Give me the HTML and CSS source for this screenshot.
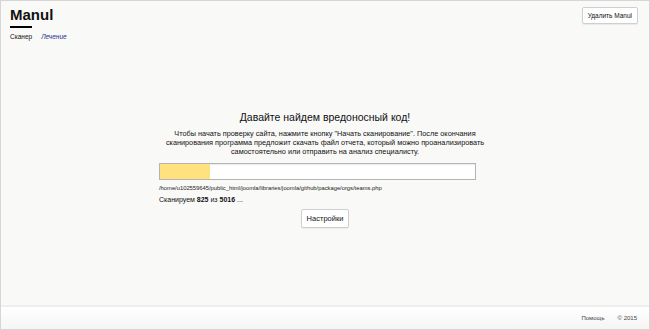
FILE: index.html
```html
<!DOCTYPE html>
<html lang="ru">
<head>
  <meta charset="utf-8">
  <title>Manul</title>
  <link rel="stylesheet" href="styles.css">
</head>
<body>
  <div class="page">
    <header class="header">
      <div class="brand">
        <h1 class="logo">Manul</h1>
        <nav class="tabs">
          <a class="tab active" href="#">Сканер</a>
          <a class="tab" href="#">Лечение</a>
        </nav>
      </div>
      <button type="button" class="btn">Удалить Manul</button>
    </header>

    <main class="main">
      <h2 class="title">Давайте найдем вредоносный код!</h2>
      <p class="intro">Чтобы начать проверку сайта, нажмите кнопку "Начать сканирование". После окончания сканирования программа предложит скачать файл отчета, который можно проанализировать самостоятельно или отправить на анализ специалисту.</p>
      <div class="scan">
        <div class="progress">
          <div class="progress-bar" style="width: 16%"></div>
        </div>
        <div class="scan-file">/home/u102559645/public_html/joomla/libraries/joomla/github/package/orgs/teams.php</div>
        <div class="scan-count">Сканируем <b>825</b> из <b>5016</b> ...</div>
      </div>
      <button type="button" class="btn btn-settings">Настройки</button>
    </main>

    <footer class="footer">
      <a href="#" class="footer-link">Помощь</a>
      <span class="copy">© 2015</span>
    </footer>
  </div>
</body>
</html>
```

FILE: styles.css
```css
html,
body {
  margin: 0;
  padding: 0;
}

body {
  font-family: "Liberation Sans", Arial, sans-serif;
  color: #111;
  background: #f9f9f8;
}

.page {
  box-sizing: border-box;
  height: 330px;
  border: 1px solid #d6d6d6;
  display: flex;
  flex-direction: column;
  background: #f9f9f8;
}

.header {
  display: flex;
  justify-content: space-between;
  align-items: flex-start;
  padding: 6px 11px 0 9px;
}

.logo {
  margin: 0;
  font-size: 15px;
  font-weight: bold;
  line-height: 16px;
  padding-bottom: 5px;
}

.logo::after {
  content: "";
  display: block;
  width: 22px;
  height: 2px;
  background: #000;
  margin-top: 3px;
}

.tabs {
  display: flex;
  gap: 9px;
}

.tab {
  font-size: 6.5px;
  color: #23338a;
  text-decoration: none;
  font-style: italic;
}

.tab.active {
  color: #111;
  font-style: normal;
}

.btn {
  font-family: "Liberation Sans", Arial, sans-serif;
  font-size: 6.5px;
  color: #111;
  background: #fff;
  border: 1px solid #cfcfcf;
  border-radius: 2px;
  padding: 0 5px;
  height: 17px;
  margin-top: 0;
  box-shadow: 0 1px 1px rgba(0, 0, 0, 0.06);
}

.main {
  flex: 1;
  display: flex;
  flex-direction: column;
  align-items: center;
  padding-top: 70px;
}

.title {
  margin: 0;
  font-size: 10.5px;
  font-weight: normal;
  line-height: 14px;
}

.intro {
  margin: 5px 0 0;
  width: 330px;
  text-align: center;
  font-size: 7.3px;
  line-height: 9px;
}

.scan {
  width: 317px;
  margin-top: 7px;
  margin-right: 15px;
}

.progress {
  height: 15px;
  background: #fff;
  border: 1px solid #b4b4b4;
  box-shadow: inset 0 1px 1px rgba(0, 0, 0, 0.08);
}

.progress-bar {
  height: 100%;
  background: #ffe17e;
}

.scan-file {
  margin-top: 4px;
  font-size: 5.8px;
  line-height: 8px;
  color: #222;
}

.scan-count {
  margin-top: 3px;
  font-size: 7px;
  line-height: 9px;
}

.btn-settings {
  margin-top: 5px;
  font-size: 7.5px;
  height: 19px;
  padding: 0 5px;
}

.footer {
  height: 22px;
  border-top: 2px solid #eeeeec;
  background: linear-gradient(#ffffff, #f5f5f4);
  display: flex;
  justify-content: flex-end;
  align-items: center;
  gap: 13px;
  padding: 0 12px 0 0;
  font-size: 6px;
  color: #444;
}

.footer-link {
  color: #444;
  text-decoration: none;
}
```
